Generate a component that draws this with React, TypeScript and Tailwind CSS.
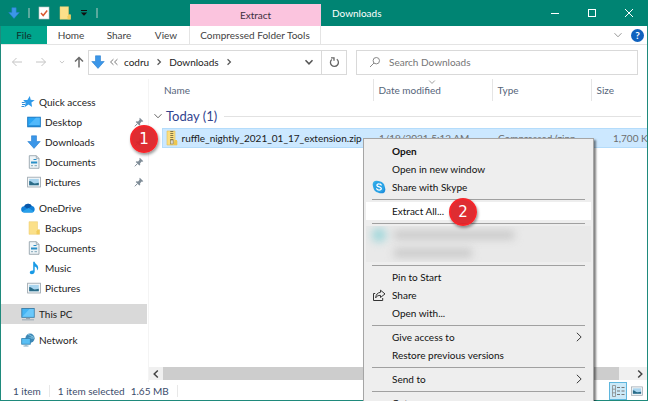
import type { ReactNode } from "react"

const DownArrowIcon = ({ className }: { className?: string }) => (
    <svg viewBox="0 0 14 14" className={className} aria-hidden="true">
        <path d="M4.5 .8h5v5.7h3.7L7 13.4.8 6.5h3.7z" fill="#3b96e8" stroke="#2a7fd0" strokeWidth=".6" />
    </svg>
)

const FolderIcon = ({ className }: { className?: string }) => (
    <svg viewBox="0 0 14 14" className={className} aria-hidden="true">
        <path d="M2 .7h8.500v8h2v4.600H2z" fill="#fbe08a" stroke="#eccb6a" strokeWidth=".5" />
        <path d="M10.500 8.700h2v4.600h-3v-3z" fill="#f2cc5b" />
    </svg>
)

const StarIcon = () => (
    <svg viewBox="0 0 14 14" className="size-3.5" aria-hidden="true">
        <path d="M8.800 1l.9 3.700 4 .6-3.300 2.200.7 4.600-3.600-2.500L3.200 12.500l1.500-4.500-2.500-2.900 4.200-.2z" fill="#2f9aea" />
        <path d="M.8 7.500h3M1 9.500h3M.5 11.500h2.500" stroke="#2f8cd8" />
    </svg>
)

const DesktopIcon = () => (
    <svg viewBox="0 0 14 14" className="size-3.5" aria-hidden="true">
        <rect x=".7" y="2.2" width="12.6" height="9.6" fill="#2aa5f5" stroke="#1272bd" strokeWidth=".9" />
        <path d="M1.2 10.5L9 2.7h3.8v7.8z" fill="#52b9fb" />
        <path d="M1.2 10.9h11.6" stroke="#1272bd" strokeWidth=".7" />
    </svg>
)

const DocumentIcon = () => (
    <svg viewBox="0 0 14 14" className="size-3.5" aria-hidden="true">
        <path d="M2.300 .7h7l2.700 2.700v9.900H2.300z" fill="#eef4f7" stroke="#8b9aa3" strokeWidth=".8" />
        <path d="M9.300 .7v2.700H12" fill="none" stroke="#8b9aa3" strokeWidth=".7" />
        <path d="M6.500 4.500h3" stroke="#2a8fc6" />
        <path d="M4 7.500h6.200" stroke="#2a8fc6" strokeWidth="2" />
        <path d="M4 10.700h2M7.500 10.700H10" stroke="#7fa5b8" />
    </svg>
)

const PictureIcon = ({ className = "size-3.5" }: { className?: string }) => (
    <svg viewBox="0 0 14 14" className={className} aria-hidden="true">
        <rect x=".6" y="2.200" width="12.800" height="9.800" fill="#f4f6f8" stroke="#97a2aa" strokeWidth=".8" />
        <rect x="2.200" y="3.900" width="9.600" height="6.400" fill="#a9d5ef" />
        <path d="M2.200 10.300V6c2 0 3.500 2.200 5.500 2.400l4.100-.6v2.500z" fill="#2b6c88" />
    </svg>
)

const CloudIcon = () => (
    <svg viewBox="0 0 14 14" className="size-3.5" aria-hidden="true">
        <path d="M3.400 11.500a3.100 3.100 0 01-.3-6.200A4.300 4.300 0 0110.800 5a3.300 3.300 0 01.3 6.500z" fill="#1180d8" />
        <path d="M3.100 5.300A4.300 4.300 0 0110.800 5L6.600 7.900z" fill="#0a57a8" />
        <path d="M1.200 10.600l6.200-3.700 5.800 3.600a3 3 0 01-2.100 1H3.400a3 3 0 01-2.200-.9z" fill="#28a0ea" />
    </svg>
)

const MusicIcon = () => (
    <svg viewBox="0 0 14 14" className="size-3.5" aria-hidden="true">
        <path d="M6.200 .8h1.500c.1 2.200 3.600 3 3.500 5.900 0 1.100-.5 2-1.300 2.700.6-2.300-.6-3.400-2.200-4v5.200c0 1.600-1.300 2.700-2.800 2.700-1.300 0-2.100-.7-2.100-1.700 0-1.300 1.500-2.300 3.400-2z" fill="#189ae6" />
    </svg>
)

const ComputerIcon = () => (
    <svg viewBox="0 0 14 14" className="size-3.5" aria-hidden="true">
        <rect x=".8" y="1.500" width="12.400" height="8.800" fill="#45b5f4" stroke="#3b7ca5" strokeWidth=".9" />
        <path d="M1.300 9.800L8.500 2h4.200v7.800z" fill="#6bc8fa" />
        <path d="M1 12.800h12" stroke="#a3b0b8" strokeWidth="1.200" />
        <path d="M5 11.300h4" stroke="#8799a4" />
    </svg>
)

const NetworkIcon = () => (
    <svg viewBox="0 0 14 14" className="size-3.5" aria-hidden="true">
        <circle cx="9" cy="5.200" r="4.600" fill="#3e88b6" />
        <path d="M7 1.500c2.300.4 3 2 5.600 2.600M6 6c3-2 5-.5 7-1" stroke="#8ccbe6" fill="none" />
        <rect x=".7" y="5.600" width="8.600" height="5.600" fill="#59bff4" stroke="#2e7fae" strokeWidth=".8" />
        <path d="M2.500 13h5M5 11.500V13" stroke="#7fa9bf" />
    </svg>
)

const PinIcon = () => (
    <svg viewBox="0 0 10 10" className="size-2.5" aria-hidden="true">
        <path d="M5.800 .8l3.500 3.400-1 .5-.6-.1-1.600 1.700.1 1.600-.8.7L1.700 5l.8-.7 1.600.1 1.500-1.700-.2-1z" fill="#7f8c97" />
        <path d="M3.500 6.600L.8 9.300" stroke="#7f8c97" />
    </svg>
)

const ZipIcon = () => (
    <svg viewBox="0 0 12 16" className="h-4 w-3 shrink-0" aria-hidden="true">
        <path d="M1 1h8v10h2v4H1z" fill="#fbdf81" stroke="#e2bf55" strokeWidth=".6" />
        <path d="M9 10h2v5H8v-3z" fill="#edc650" />
        <path d="M5.800 1v10" stroke="#857544" strokeWidth="3" strokeDasharray="1 1" />
        <rect x="4.600" y="10" width="2.600" height="4" fill="#d9d9d2" stroke="#857544" strokeWidth=".6" />
    </svg>
)

const SkypeIcon = () => (
    <svg viewBox="0 0 14 14" className="size-3.5" aria-hidden="true">
        <circle cx="4.600" cy="4.600" r="3.900" fill="#32aee8" />
        <circle cx="9.400" cy="9.400" r="3.900" fill="#1f8fdc" />
        <circle cx="7" cy="7" r="5.700" fill="#2aa3e6" />
        <path d="M9.200 5c-.4-.8-1.200-1.100-2.200-1.100-1.200-.1-2.100.5-2.100 1.400 0 2.200 4.400 1.100 4.400 3.300 0 .9-.9 1.500-2.200 1.500-1.200 0-2-.4-2.400-1.300" fill="none" stroke="#fff" strokeWidth="1.300" strokeLinecap="round" />
    </svg>
)

const ShareIcon = () => (
    <svg viewBox="0 0 14 14" className="size-3.5" fill="none" stroke="#333" aria-hidden="true">
        <path d="M3.200 5.500H1.500v7h9.200V10" />
        <path d="M8.500 2.200L13 5.900 8.500 9.500V7.400C6.200 7.300 4.900 8 3.700 9.800c.2-3.200 1.800-5.100 4.800-5.500z" strokeLinejoin="round" />
    </svg>
)

type ChevronProps = { dir: "down" | "left" | "right"; className?: string; width?: number }

const CHEVRONS = {
    down: "M1.500 3.200L5 6.800l3.500-3.600",
    left: "M6.800 1.500L3.200 5l3.600 3.500",
    right: "M3.200 1.500L6.800 5 3.200 8.500",
}

const Chevron = ({ dir, className, width = 1 }: ChevronProps) => (
    <svg viewBox="0 0 10 10" className={className} fill="none" stroke="currentColor" strokeWidth={width} aria-hidden="true">
        <path d={CHEVRONS[dir]} />
    </svg>
)

type NavItem = { name: string; icon: ReactNode; pinned?: boolean }

const QUICK_ACCESS: NavItem[] = [
    { name: "Desktop", icon: <DesktopIcon />, pinned: true },
    { name: "Downloads", icon: <DownArrowIcon className="size-3.5" />, pinned: true },
    { name: "Documents", icon: <DocumentIcon />, pinned: true },
    { name: "Pictures", icon: <PictureIcon />, pinned: true },
]

const ONEDRIVE: NavItem[] = [
    { name: "Backups", icon: <FolderIcon className="size-3.5" /> },
    { name: "Documents", icon: <DocumentIcon /> },
    { name: "Music", icon: <MusicIcon /> },
    { name: "Pictures", icon: <PictureIcon /> },
]

const RootLink = ({ name, icon, selected }: { name: string; icon: ReactNode; selected?: boolean }) => (
    <a href="#" className={`flex h-5 items-center gap-1 pl-5 ${selected ? "bg-[#d9d9d9]" : ""}`}>
        {icon}
        {name}
    </a>
)

const NavGroup = ({ name, icon, items }: { name: string; icon: ReactNode; items: NavItem[] }) => (
    <div>
        <RootLink name={name} icon={icon} />
        {items.map((item) => (
            <a key={item.name} href="#" className="flex h-5 items-center gap-1 pr-[3px] pl-[26px]">
                {item.icon}
                <span className="flex-1">{item.name}</span>
                {item.pinned && <PinIcon />}
            </a>
        ))}
    </div>
)

const TitleBar = () => (
    <header className="flex h-[26px] shrink-0 bg-[#008473] text-white">
        <div className="flex w-[190px] items-center gap-2 pl-2">
            <DownArrowIcon className="size-3" />
            <span className="h-2.5 w-[2px] border-x border-[#5aa99d]" />
            <svg viewBox="0 0 12 14" className="h-3.5 w-3" aria-hidden="true">
                <rect x="1" y="1" width="10" height="12" fill="#fff" stroke="#b9c3c1" strokeWidth=".6" />
                <path d="M3 7l2.200 2.500L9.200 4.500" fill="none" stroke="#d9582f" strokeWidth="1.500" />
            </svg>
            <FolderIcon className="size-3.5" />
            <svg viewBox="0 0 8 8" className="size-2" aria-hidden="true">
                <path d="M1 1.500h6" stroke="#111" />
                <path d="M.8 3.500h6.400L4 6.800z" fill="#111" />
            </svg>
            <span className="h-2.5 w-[2px] border-x border-[#5aa99d]" />
        </div>
        <div className="mt-1 flex w-[131px] items-center justify-center bg-[#fbc4de] text-[#3c3040]">Extract</div>
        <h1 className="flex flex-1 items-center pl-[11px]">Downloads</h1>
        <div className="flex items-center gap-[27px] pr-3.5">
            <button type="button" aria-label="Minimize">
                <svg viewBox="0 0 10 10" className="size-2.5" stroke="#fff"><path d="M1 5.500h8" /></svg>
            </button>
            <button type="button" aria-label="Maximize">
                <svg viewBox="0 0 10 10" className="size-2.5" stroke="#fff" fill="none"><rect x="1.500" y="1.500" width="7" height="7" /></svg>
            </button>
            <button type="button" aria-label="Close">
                <svg viewBox="0 0 10 10" className="size-2.5" stroke="#fff"><path d="M1 1l8 8M9 1L1 9" /></svg>
            </button>
        </div>
    </header>
)

const RibbonTabs = () => (
    <nav className="flex h-[19px] shrink-0 items-stretch border-b border-[#e4e4e4] text-[#3f3f3f]" aria-label="Ribbon">
        <button type="button" className="w-[46px] bg-[#00a58c] text-[#10302b]">File</button>
        <button type="button" className="w-12">Home</button>
        <button type="button" className="w-12">Share</button>
        <button type="button" className="w-[47px] border-r border-[#e4e4e4]">View</button>
        <button type="button" className="w-[131px] border-r border-[#e4e4e4]">Compressed Folder Tools</button>
        <div className="flex flex-1 items-center justify-end gap-2 pr-[3px]">
            <Chevron dir="down" className="size-2.5 text-[#999]" />
            <button type="button" aria-label="Help" className="flex size-[13px] items-center justify-center rounded-full bg-[#0f62be] font-bold text-white">
                ?
            </button>
        </div>
    </nav>
)

const AddressRow = () => (
    <div className="flex h-[34px] shrink-0 items-center">
        <div className="flex w-[87px] items-center gap-3 pl-2.5 text-[#c4c4c4]">
            <svg viewBox="0 0 12 12" className="size-3" fill="none" stroke="currentColor" aria-hidden="true">
                <path d="M11 6H1.500M5.500 2l-4 4 4 4" />
            </svg>
            <svg viewBox="0 0 12 12" className="size-3" fill="none" stroke="currentColor" aria-hidden="true">
                <path d="M1 6h9.500M6.500 2l4 4-4 4" />
            </svg>
            <div className="flex items-center gap-2">
                <Chevron dir="down" className="size-1.5" width={1.5} />
                <svg viewBox="0 0 12 12" className="size-3 text-[#6a6a6a]" fill="none" stroke="currentColor" strokeWidth="1.500" aria-hidden="true">
                    <path d="M6 11.500V1.500M2 5.500l4-4 4 4" />
                </svg>
            </div>
        </div>
        <div className="flex h-[25px] min-w-0 flex-1 items-center border border-[#d9d9d9] pl-[2px] text-[#222]">
            <DownArrowIcon className="size-3.5" />
            <span className="ml-[3px] flex text-[#555]">
                <Chevron dir="left" className="size-2" />
                <Chevron dir="left" className="-ml-1 size-2" />
            </span>
            <a href="#" className="ml-1">codru</a>
            <Chevron dir="right" className="mx-1.5 size-2 text-[#555]" width={1.5} />
            <a href="#">Downloads</a>
            <Chevron dir="right" className="mx-1.5 size-2 text-[#555]" width={1.5} />
            <div className="ml-auto flex h-full items-center">
                <Chevron dir="down" className="mr-[7px] size-2.5 text-[#555]" width={1.5} />
                <button type="button" aria-label="Refresh" className="flex h-full w-[25px] items-center justify-center border-l border-[#d9d9d9]">
                    <svg viewBox="0 0 12 12" className="size-3" fill="none" stroke="#666" strokeWidth="1.300" aria-hidden="true">
                        <path d="M8.800 3.200a4 4 0 11-5 .2M3 1.800h3v3" />
                    </svg>
                </button>
            </div>
        </div>
        <label className="mr-[9px] ml-[9px] flex h-[25px] w-[282px] items-center gap-2 border border-[#d9d9d9] pl-3 xl:w-[30vw]">
            <svg viewBox="0 0 12 12" className="size-3 shrink-0" fill="none" stroke="#888" aria-hidden="true">
                <circle cx="7.300" cy="4.700" r="3.200" />
                <path d="M5 7L1 11" />
            </svg>
            <input type="text" aria-label="Search Downloads" placeholder="Search Downloads" className="min-w-0 flex-1 outline-none placeholder:text-[#757575]" />
        </label>
    </div>
)

const Sidebar = () => (
    <aside className="flex w-[146px] shrink-0 flex-col gap-[6px] pt-[13px] text-[#222]">
        <NavGroup name="Quick access" icon={<StarIcon />} items={QUICK_ACCESS} />
        <NavGroup name="OneDrive" icon={<CloudIcon />} items={ONEDRIVE} />
        <RootLink name="This PC" icon={<ComputerIcon />} selected />
        <RootLink name="Network" icon={<NetworkIcon />} />
    </aside>
)

const FileList = () => (
    <main className="ml-px flex min-w-0 flex-1 flex-col overflow-hidden border-l border-[#f4f4f4]">
        <table className="w-full table-fixed text-left whitespace-nowrap">
            <colgroup>
                <col className="w-[13px]" />
                <col />
                <col className="w-[119px]" />
                <col className="w-[99px]" />
                <col className="w-[56px]" />
            </colgroup>
            <thead className="text-[#56657a]">
                <tr className="h-[22px]">
                    <th />
                    <th className="pl-0.5 font-normal">Name</th>
                    <th className="relative border-l border-[#e5e5e5] pl-[5px] font-normal">
                        Date modified
                        <Chevron dir="down" className="absolute -top-px left-[54px] size-2 text-[#888]" />
                    </th>
                    <th className="border-l border-[#e5e5e5] pl-[5px] font-normal">Type</th>
                    <th className="border-l border-[#e5e5e5] pl-[5px] font-normal">Size</th>
                </tr>
            </thead>
            <tbody>
                <tr className="h-[27px]">
                    <td colSpan={5} className="pt-1 pr-1.5 pl-1">
                        <div className="flex items-center gap-[3px] text-[13px] leading-4 text-[#32448f]">
                            <Chevron dir="down" className="size-2.5 text-[#666]" />
                            Today (1)
                            <span className="ml-1 h-px flex-1 bg-[#e2e2e2]" />
                        </div>
                    </td>
                </tr>
                <tr className="h-[19px] text-[#6d6d6d]">
                    <td />
                    <td className="border-y border-l border-[#b4dcfb] bg-[#cce8ff] text-[#1a1a1a]">
                        <div className="flex items-center gap-1 pl-[3px]">
                            <ZipIcon />
                            ruffle_nightly_2021_01_17_extension.zip
                        </div>
                    </td>
                    <td className="border-y border-[#b4dcfb] bg-[#cce8ff] pl-1.5">1/19/2021 5:12 AM</td>
                    <td className="truncate border-y border-[#b4dcfb] bg-[#cce8ff] pl-1.5">Compressed (zipp...</td>
                    <td className="border-y border-[#b4dcfb] bg-[#cce8ff] pl-[22px]">1,700 KB</td>
                </tr>
            </tbody>
        </table>
        <div className="mt-auto mb-[2px] flex h-[13px] items-center bg-[#f0f0f0] text-[#444]">
            <Chevron dir="left" className="mx-0.5 size-2.5" width={1.5} />
            <span className="h-full flex-1 bg-[#cdcdcd]" />
            <Chevron dir="right" className="mr-0.5 ml-4 size-2.5" width={1.5} />
        </div>
    </main>
)

const StatusBar = () => (
    <footer className="flex h-[18px] shrink-0 items-center text-[#3b4c6b]">
        <span className="border-r border-[#e8e8e8] pr-2 pl-3">1 item</span>
        <span className="flex gap-1.5 border-r border-[#e8e8e8] px-2">
            <span>1 item selected</span>
            <span>1.65 MB</span>
        </span>
        <div className="ml-auto flex h-full items-center gap-1 pr-1">
            <button type="button" aria-label="Details view" className="flex h-full w-[18px] items-center justify-center border border-[#5fb6dd] bg-[#cbe9f8]">
                <svg viewBox="0 0 14 12" className="h-3 w-3.5" fill="none" aria-hidden="true">
                    <path d="M1.500 .5h3v11h-3zM1.500 4.200h3M1.500 7.800h3" stroke="#888" strokeWidth=".8" />
                    <path d="M6 2.500h3M10.500 2.500h3M6 6h3M10.500 6h3M6 9.500h3M10.500 9.500h3" stroke="#777" />
                </svg>
            </button>
            <button type="button" aria-label="Large icons view">
                <PictureIcon className="size-3" />
            </button>
        </div>
    </footer>
)

const MenuItem = ({ children, icon, submenu, className = "" }: { children: ReactNode; icon?: ReactNode; submenu?: boolean; className?: string }) => (
    <button type="button" role="menuitem" className={`flex h-[18px] w-full items-center pr-1.5 text-left ${className}`}>
        <span className="flex w-[26px] shrink-0 justify-center">{icon}</span>
        {children}
        {submenu && <Chevron dir="right" className="ml-auto size-3 text-[#333]" width={0.8} />}
    </button>
)

const Separator = () => (
    <div role="separator" className="mx-[6px] flex h-[6px] items-center">
        <span className="h-px w-full bg-[#a0a0a0]" />
    </div>
)

const ContextMenu = () => (
    <div role="menu" className="absolute top-[138px] left-[363px] z-10 w-[231px] border border-[#a5a5a5] bg-[#eeeeee] px-[2px] py-[3px] text-[#111] shadow-[2px_2px_2px_rgba(0,0,0,0.5)]">
        <MenuItem className="font-bold">Open</MenuItem>
        <MenuItem>Open in new window</MenuItem>
        <MenuItem icon={<SkypeIcon />}>Share with Skype</MenuItem>
        <Separator />
        <MenuItem className="bg-white">Extract All...</MenuItem>
        <Separator />
        <div className="h-9 overflow-hidden bg-[#e9e9e9]" aria-hidden="true">
            <div className="flex h-[18px] items-center gap-2 pl-1.5 blur-[4px]">
                <span className="size-3.5 rounded-full bg-[#9dd6da]" />
                <span className="h-2 w-[120px] bg-[#c6c6c6]" />
            </div>
            <div className="flex h-[18px] items-center pl-7 blur-[4px]">
                <span className="h-2 w-[78px] bg-[#c6c6c6]" />
            </div>
        </div>
        <Separator />
        <MenuItem>Pin to Start</MenuItem>
        <MenuItem icon={<ShareIcon />}>Share</MenuItem>
        <MenuItem>Open with...</MenuItem>
        <Separator />
        <MenuItem submenu>Give access to</MenuItem>
        <MenuItem>Restore previous versions</MenuItem>
        <Separator />
        <MenuItem submenu>Send to</MenuItem>
        <Separator />
        <MenuItem>Cut</MenuItem>
    </div>
)

const StepBadge = ({ step, className }: { step: number; className: string }) => (
    <span className={`absolute z-20 flex size-7 items-center justify-center rounded-full border-2 border-[#f5262b] bg-[#dc2227]/95 font-['DejaVu_Sans',sans-serif] text-[15px] text-white shadow-[1px_2px_3px_rgba(0,0,0,0.4)] ${className}`}>
        {step}
    </span>
)

export default function App() {
    return (
        <div className="relative flex h-screen flex-col overflow-hidden bg-white font-[Lato,sans-serif] text-[10px] leading-3">
            <TitleBar />
            <div className="flex min-h-0 flex-1 flex-col border-x border-b border-[#1f8a7c]">
                <RibbonTabs />
                <AddressRow />
                <div className="flex min-h-0 flex-1">
                    <Sidebar />
                    <FileList />
                </div>
                <StatusBar />
            </div>
            <ContextMenu />
            <StepBadge step={1} className="top-[125px] left-[130px]" />
            <StepBadge step={2} className="top-[198px] left-[449px]" />
        </div>
    )
}
